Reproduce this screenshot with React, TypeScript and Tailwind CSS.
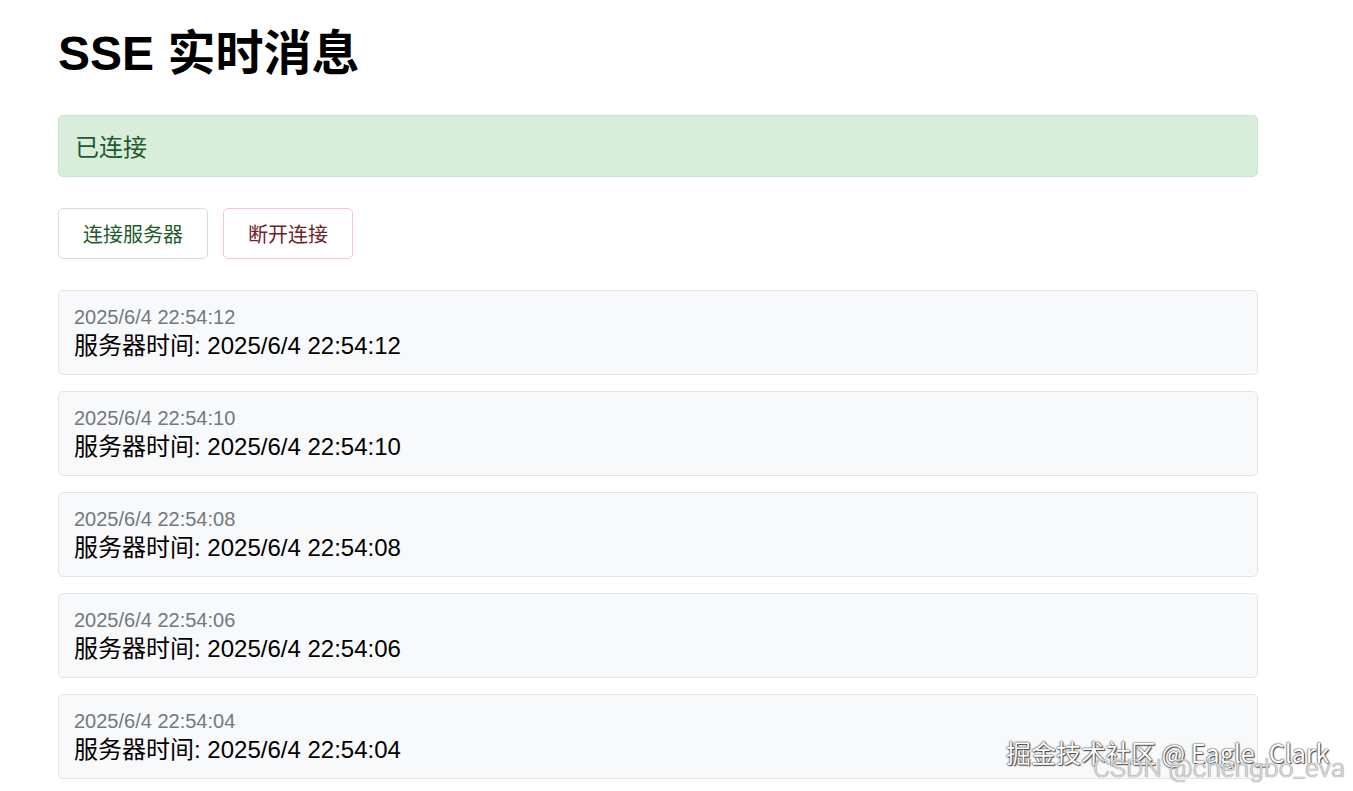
const messages = [
  '2025/6/4 22:54:12',
  '2025/6/4 22:54:10',
  '2025/6/4 22:54:08',
  '2025/6/4 22:54:06',
  '2025/6/4 22:54:04',
]

const font = "font-['Liberation_Sans','Noto_Sans_CJK_SC',sans-serif]"

export default function App() {
  return (
    <div className={`relative min-h-screen bg-white ${font}`}>
      <div className="w-[1200px] ml-[58px] pt-[25px]">
        <h1 className="text-[48px] leading-[58px] font-bold text-black">SSE 实时消息</h1>

        <div className="mt-[32px] bg-[#d9eddb] border border-[#c8e5cd] rounded-[5px] px-[16px] pt-[16px] pb-[12px] text-[24px] leading-[32px] text-[#1f5a2c]">
          已连接
        </div>

        <div className="mt-[31px] flex gap-[15px]">
          <button className="bg-white border border-[#cfe3d4] rounded-[5px] px-[24px] pt-[13px] pb-[9px] text-[20px] leading-[27px] text-[#1f5a2c]">
            连接服务器
          </button>
          <button className="bg-white border border-[#eec9d0] rounded-[5px] px-[24px] pt-[13px] pb-[9px] text-[20px] leading-[27px] text-[#6b2229]">
            断开连接
          </button>
        </div>

        <div className="mt-[31px] flex flex-col gap-[16px]">
          {messages.map((t) => (
            <div key={t} className="bg-[#f8f9fa] border border-[#e1e4e8] rounded-[5px] px-[15px] pt-[15px] pb-[13px]">
              <div className="text-[20px] leading-[23px] text-[#73787d]">{t}</div>
              <div className="mt-[2px] text-[24px] leading-[30px] text-black">服务器时间: {t}</div>
            </div>
          ))}
        </div>
      </div>

      {/* watermarks */}
      <div className="absolute left-[1006px] top-[737px] text-[25px] leading-[30px] text-white font-['Noto_Sans_CJK_SC',sans-serif] whitespace-nowrap [text-shadow:0_0_2px_#333,0_0_1px_#333,1px_1px_1px_#555]">
        掘金技术社区 @ Eagle_Clark
      </div>
      <div className="absolute left-[1093px] top-[753px] text-[26.5px] leading-[30px] text-[rgba(230,230,230,0.85)] font-['Roboto',sans-serif] font-light whitespace-nowrap [text-shadow:0_0_1px_#888,0_0_1px_#999]">
        CSDN @chengbo_eva
      </div>
    </div>
  )
}
